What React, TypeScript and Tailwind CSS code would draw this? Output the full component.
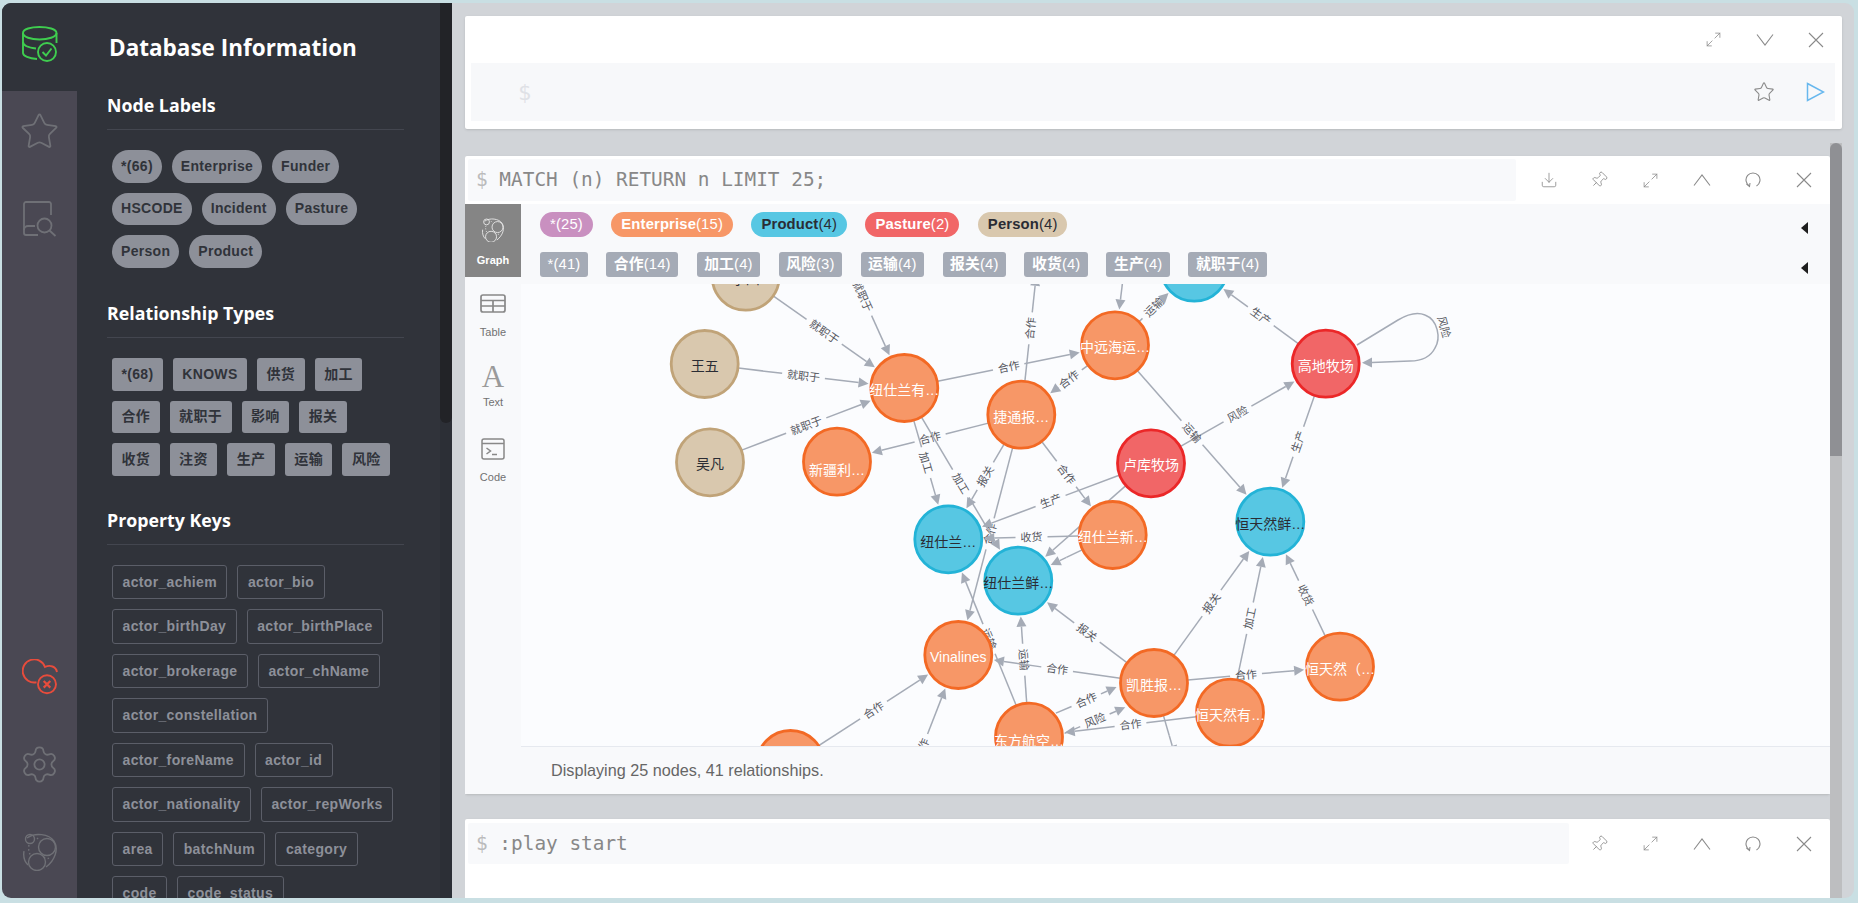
import React from 'react';
import { Star, Settings, Download, Pin, Maximize2 } from 'lucide-react';

type Pt = { x: number; y: number };

const R = 34;

const colors = {
  orange: { fill: '#f79767', stroke: '#f36924', text: '#ffffff' },
  blue: { fill: '#57c7e3', stroke: '#23b3d7', text: '#2a2c34' },
  red: { fill: '#f16667', stroke: '#eb2728', text: '#ffffff' },
  tan: { fill: '#d9c8ae', stroke: '#c0a378', text: '#2a2c34' },
};

// node positions are page pixels, the svg viewBox starts at the canvas corner
const nodes: Record<string, Pt & { label: string; kind: keyof typeof colors; dy?: number }> = {
  li: { x: 745.7, y: 276.7, label: '李四', kind: 'tan' },
  wang: { x: 704.7, y: 364, label: '王五', kind: 'tan' },
  wu: { x: 710, y: 462.3, label: '吴凡', kind: 'tan' },
  nzCo: { x: 904.3, y: 388, label: '纽仕兰有…', kind: 'orange' },
  xj: { x: 837, y: 461.7, label: '新疆利…', kind: 'orange', dy: 8 },
  jt: { x: 1021.3, y: 414.7, label: '捷通报…', kind: 'orange' },
  cosco: { x: 1115, y: 345.3, label: '中远海运…', kind: 'orange' },
  nzA: { x: 948.3, y: 539.3, label: '纽仕兰…', kind: 'blue', dy: 3 },
  nzNew: { x: 1112.7, y: 535, label: '纽仕兰新…', kind: 'orange' },
  luku: { x: 1151, y: 463.3, label: '卢库牧场', kind: 'red' },
  gaodi: { x: 1325.7, y: 363.7, label: '高地牧场', kind: 'red' },
  htFresh: { x: 1270.3, y: 521.7, label: '恒天然鲜…', kind: 'blue' },
  topBlue: { x: 1194.3, y: 267.7, label: '', kind: 'blue' },
  nzFresh: { x: 1018.3, y: 580.7, label: '纽仕兰鲜…', kind: 'blue' },
  vina: { x: 958.3, y: 655, label: 'Vinalines', kind: 'orange' },
  ks: { x: 1154, y: 683, label: '凯胜报…', kind: 'orange' },
  htCo: { x: 1230, y: 712.7, label: '恒天然有…', kind: 'orange' },
  ht: { x: 1340, y: 666.7, label: '恒天然（…', kind: 'orange' },
  east: { x: 1029, y: 736.7, label: '东方航空…', kind: 'orange', dy: 4 },
  low: { x: 790.5, y: 764, label: '', kind: 'orange' },
};

const off: Record<string, Pt> = {
  a: { x: 822, y: 206 },
  b: { x: 1040, y: 240 },
  c: { x: 1130, y: 220 },
  d: { x: 1185, y: 790 },
  e: { x: 886, y: 841 },
};

const at = (k: string): Pt => nodes[k] || off[k];

// from, to, label, perpendicular offset
const edges: [string, string, string, number?][] = [
  ['li', 'nzCo', '就职于'],
  ['wang', 'nzCo', '就职于'],
  ['wu', 'nzCo', '就职于'],
  ['a', 'nzCo', '就职于'],
  ['nzCo', 'cosco', '合作'],
  ['cosco', 'jt', '合作'],
  ['jt', 'xj', '合作'],
  ['jt', 'b', '合作'],
  ['jt', 'nzA', '报关'],
  ['jt', 'nzNew', '合作'],
  ['jt', 'vina', '合作'],
  ['nzCo', 'nzA', '加工'],
  ['nzCo', 'nzFresh', '加工'],
  ['luku', 'nzA', '生产'],
  ['luku', 'nzFresh', ''],
  ['nzNew', 'nzA', '收货'],
  ['nzNew', 'nzFresh', ''],
  ['cosco', 'topBlue', '运输'],
  ['c', 'cosco', ''],
  ['gaodi', 'topBlue', '生产'],
  ['luku', 'gaodi', '风险'],
  ['cosco', 'htFresh', '运输'],
  ['gaodi', 'htFresh', '生产'],
  ['ks', 'htFresh', '报关'],
  ['htCo', 'htFresh', '加工'],
  ['ht', 'htFresh', '收货'],
  ['ks', 'nzFresh', '报关'],
  ['east', 'nzFresh', '运输'],
  ['east', 'nzA', '运输'],
  ['ks', 'vina', '合作'],
  ['ks', 'ht', '合作'],
  ['east', 'ks', '合作', -11],
  ['east', 'ks', '风险', 11],
  ['htCo', 'east', '合作'],
  ['ks', 'd', ''],
  ['low', 'vina', '合作'],
  ['e', 'vina', '合作'],
];

const EDGE = '#a5abb6';

const Edge = ({ from, to, label, o = 0 }: { from: Pt; to: Pt; label: string; o?: number }) => {
  const dx = to.x - from.x;
  const dy = to.y - from.y;
  const len = Math.hypot(dx, dy);
  const ux = dx / len;
  const uy = dy / len;
  const px = -uy * o;
  const py = ux * o;
  const sx = from.x + ux * R + px;
  const sy = from.y + uy * R + py;
  const tx = to.x - ux * (R + 2) + px;
  const ty = to.y - uy * (R + 2) + py;
  const mx = (sx + tx) / 2;
  const my = (sy + ty) / 2;
  const gap = label ? label.length * 5.5 + 5 : 0;
  const hx = tx - ux * 10;
  const hy = ty - uy * 10;
  let angle = (Math.atan2(dy, dx) * 180) / Math.PI;
  if (angle > 90) angle -= 180;
  if (angle < -90) angle += 180;
  return (
    <g>
      <line x1={sx} y1={sy} x2={mx - ux * gap} y2={my - uy * gap} stroke={EDGE} strokeWidth={1.5} />
      <line x1={mx + ux * gap} y1={my + uy * gap} x2={hx} y2={hy} stroke={EDGE} strokeWidth={1.5} />
      <polygon
        points={`${tx},${ty} ${hx - uy * 5},${hy + ux * 5} ${hx + uy * 5},${hy - ux * 5}`}
        fill={EDGE}
      />
      {label && (
        <text
          x={mx}
          y={my}
          fontSize={11}
          fill="#55575e"
          textAnchor="middle"
          dominantBaseline="central"
          transform={`rotate(${angle} ${mx} ${my})`}
        >
          {label}
        </text>
      )}
    </g>
  );
};

const GraphCanvas = () => (
  <svg viewBox="521 284 1309 462" className="block w-[1309px] h-[462px]">
    {edges.map(([a, b, label, o], i) => (
      <Edge key={i} from={at(a)} to={at(b)} label={label} o={o} />
    ))}
    {/* self loop on 高地牧场 */}
    <path
      d="M1357 345 L1398 320 C1408 314 1418 312 1425 315 C1438 320 1441 338 1435 348 C1430 358 1421 361 1410 361 L1372 362.5"
      fill="none"
      stroke={EDGE}
      strokeWidth={1.5}
    />
    <polygon points="1362,362.7 1372,357.5 1372,367.5" fill={EDGE} />
    <text
      x={1444}
      y={327}
      fontSize={11}
      fill="#55575e"
      textAnchor="middle"
      dominantBaseline="central"
      transform="rotate(75 1444 327)"
    >
      风险
    </text>
    {Object.entries(nodes).map(([k, n]) => {
      const c = colors[n.kind];
      return (
        <g key={k}>
          <circle cx={n.x} cy={n.y} r={33.5} fill={c.fill} stroke={c.stroke} strokeWidth={2.8} />
          <text
            x={n.x}
            y={n.y + (n.dy ?? 2)}
            fontSize={14}
            fill={c.text}
            textAnchor="middle"
            dominantBaseline="central"
          >
            {n.label}
          </text>
        </g>
      );
    })}
  </svg>
);

const iconCls = 'text-[#8a8a8a]';

const ExpandIcon = () => <Maximize2 size={17} strokeWidth={1.1} className={iconCls} />;
const DownloadIcon = () => <Download size={18} strokeWidth={1.1} className={iconCls} />;
const PinIcon = () => <Pin size={18} strokeWidth={1.1} className={`${iconCls} rotate-45 -translate-x-[1px]`} />;
const CloseIcon = () => (
  <svg width="16" height="16" viewBox="0 0 16 16" className={iconCls} fill="none" stroke="currentColor" strokeWidth="1.1">
    <path d="M1 1 L15 15 M15 1 L1 15" />
  </svg>
);
const ChevronUp = () => (
  <svg width="18" height="12" viewBox="0 0 18 12" className={iconCls} fill="none" stroke="currentColor" strokeWidth="1.1">
    <path d="M1 11.5 L9 1 L17 11.5" />
  </svg>
);
const ChevronDown = () => (
  <svg width="18" height="12" viewBox="0 0 18 12" className={iconCls} fill="none" stroke="currentColor" strokeWidth="1.1">
    <path d="M1 .5 L9 11 L17 .5" />
  </svg>
);
const RefreshIcon = () => (
  <svg width="16" height="16" viewBox="0 0 16 16" className={iconCls} fill="none" stroke="currentColor" strokeWidth="1.1">
    <path d="M4.5 14 A7 7 0 1 1 11.5 14" />
    <path d="M1.5 12 L4.5 14.5 L5 11" />
  </svg>
);

const ToolBtn = ({ children }: { children: React.ReactNode }) => (
  <div className="w-[51px] h-full flex items-center justify-center">{children}</div>
);

const NeoLogo = ({ className, size = 36 }: { className: string; size?: number }) => (
  <svg width={size} height={size * 1.12} viewBox="0 0 34 38" fill="none" stroke="currentColor" className={className}>
    <path strokeWidth="1.4" d="M4 5 C12 -1 26 1 31 8 C36 16 32 27 23 34" />
    <path strokeWidth="1.4" d="M1 18 C0 24 2 29 5 32" />
    <circle cx="7" cy="6" r="4.5" strokeWidth="1.4" />
    <circle cx="24" cy="14" r="8.5" strokeWidth="1.4" />
    <circle cx="14" cy="29" r="8.5" strokeWidth="1.4" />
    <path strokeWidth="1.4" strokeDasharray="1.5 2.5" d="M6 12 C5 16 6 20 8 23 M14 5 C15 6 16 7 17 8 M21 24 C22 25 24 26 26 25" />
  </svg>
);

const DbIcon = () => (
  <svg width="36" height="36" viewBox="0 0 36 36" fill="none" stroke="#3fcd4f" strokeWidth="1.9">
    <path d="M1 7 C1 3 9 1 17.5 1 C26 1 34.500 3 34.500 7 C34.500 11 26 13.500 17.500 13.500 C9 13.500 1 11 1 7 Z" />
    <path d="M1 7 V27 C1 30 7 32.500 15 33" />
    <path d="M1 16 C1 19 6 21.500 14 22.500" />
    <path d="M34.500 7 V17" />
    <circle cx="25" cy="26" r="9" />
    <path d="M20.500 26 L24 29.500 L29.500 22.500" />
  </svg>
);

const CloudErrIcon = () => (
  <svg width="36" height="36" viewBox="0 0 36 36" fill="none" stroke="#e74c3c" strokeWidth="1.9">
    <path d="M14.500 23.200 A11.500 11.500 0 1 1 23 8 C28 5.500 34 7.500 35 13" />
    <circle cx="25" cy="25.300" r="9" />
    <path d="M21.700 22 L28.300 28.600 M28.300 22 L21.700 28.600" strokeWidth="2.200" />
  </svg>
);

const DocSearchIcon = () => (
  <svg width="36" height="36" viewBox="0 0 36 36" fill="none" stroke="#6f7076" strokeWidth="1.8">
    <path d="M29 14 V3 A2 2 0 0 0 27 1 H4 A2 2 0 0 0 2 3 V32 A2 2 0 0 0 4 34 H16" />
    <path d="M2 29 A4 4 0 0 1 6 25 H13" />
    <circle cx="22.500" cy="24.500" r="7" />
    <path d="M27.500 29.500 L33.500 35" />
  </svg>
);

const NavItem = ({ children, active }: { children: React.ReactNode; active?: boolean }) => (
  <div className={`h-[87.5px] flex items-center justify-center pb-[5px] ${active ? 'bg-[#30333a]' : ''}`}>
    {children}
  </div>
);

const Nav = () => (
  <div className="w-[75px] shrink-0 flex flex-col bg-[#4a4853]">
    <NavItem active>
      <DbIcon />
    </NavItem>
    <NavItem>
      <Star size={41} strokeWidth={1.05} className="text-[#6f7076]" />
    </NavItem>
    <NavItem>
      <DocSearchIcon />
    </NavItem>
    <div className="flex-1" />
    <NavItem>
      <CloudErrIcon />
    </NavItem>
    <NavItem>
      <Settings size={41} strokeWidth={1.05} className="text-[#6f7076]" />
    </NavItem>
    <NavItem>
      <NeoLogo size={34} className="text-[#6f7076]" />
    </NavItem>
  </div>
);

const nodeLabels = ['*(66)', 'Enterprise', 'Funder', 'HSCODE', 'Incident', 'Pasture', 'Person', 'Product'];
const relTypes = ['*(68)', 'KNOWS', '供货', '加工', '合作', '就职于', '影响', '报关', '收货', '注资', '生产', '运输', '风险'];
const propKeys = [
  'actor_achiem',
  'actor_bio',
  'actor_birthDay',
  'actor_birthPlace',
  'actor_brokerage',
  'actor_chName',
  'actor_constellation',
  'actor_foreName',
  'actor_id',
  'actor_nationality',
  'actor_repWorks',
  'area',
  'batchNum',
  'category',
  'code',
  'code_status',
];

const SectionHead = ({ title }: { title: string }) => (
  <h4 className="h-[37px] w-[297px] border-b border-[#43464f] font-['Open_Sans',sans-serif] font-bold text-[17.8px] leading-[24px] text-white">
    {title}
  </h4>
);

const Drawer = () => (
  <div className="w-[375px] shrink-0 flex bg-[#30333a]">
    <div className="w-[363px] pl-[30px] overflow-hidden">
      <h3 className="mt-[29px] ml-[2px] font-['Open_Sans',sans-serif] font-bold text-[22.500px] leading-[32px] text-white">
        Database Information
      </h3>
      <div className="mt-[29px]">
        <SectionHead title="Node Labels" />
        <div className="mt-[20px] ml-[5px] w-[288px] flex flex-wrap gap-[10px]">
          {nodeLabels.map(t => (
            <span key={t} className="h-[32.67px] px-[9px] flex items-center rounded-full bg-[#8d9099] text-[#30333a] text-[14px] tracking-[0.3px] font-bold">
              {t}
            </span>
          ))}
        </div>
      </div>
      <div className="mt-[33px]">
        <SectionHead title="Relationship Types" />
        <div className="mt-[20px] ml-[5px] w-[288px] flex flex-wrap gap-[10px]">
          {relTypes.map(t => (
            <span key={t} className="h-[32.67px] px-[9.5px] flex items-center rounded-[3px] bg-[#8d9099] text-[#30333a] text-[14px] tracking-[0.3px] font-bold">
              {t}
            </span>
          ))}
        </div>
      </div>
      <div className="mt-[32px]">
        <SectionHead title="Property Keys" />
        <div className="mt-[20px] ml-[5px] w-[288px] flex flex-wrap gap-[10px]">
          {propKeys.map(t => (
            <span key={t} className="h-[34.5px] px-[9.5px] flex items-center rounded-[3px] border border-[#5b5e68] text-[#8d9099] text-[14px] tracking-[0.35px] font-bold">
              {t}
            </span>
          ))}
        </div>
      </div>
    </div>
    <div className="w-[12px] bg-[#2c2f36]">
      <div className="h-[420px] bg-[#222327] rounded-b-[6px]" />
    </div>
  </div>
);

const legend = [
  { name: '*', n: '(25)', cls: 'bg-[#c990c0] text-white', bold: false },
  { name: 'Enterprise', n: '(15)', cls: 'bg-[#f79767] text-white', bold: true },
  { name: 'Product', n: '(4)', cls: 'bg-[#57c7e3] text-[#2a2c34]', bold: true },
  { name: 'Pasture', n: '(2)', cls: 'bg-[#f16667] text-white', bold: true },
  { name: 'Person', n: '(4)', cls: 'bg-[#d9c8ae] text-[#2a2c34]', bold: true },
];

const legendRels = [
  ['*', '(41)'],
  ['合作', '(14)'],
  ['加工', '(4)'],
  ['风险', '(3)'],
  ['运输', '(4)'],
  ['报关', '(4)'],
  ['收货', '(4)'],
  ['生产', '(4)'],
  ['就职于', '(4)'],
];

const Triangle = () => (
  <div className="ml-auto mr-[22px] mt-[10px] w-0 h-0 border-y-[6px] border-y-transparent border-r-[7px] border-r-[#1e1e1e]" />
);

const Tab = ({ label, icon, active, labelCls }: { label: string; icon: React.ReactNode; active?: boolean; labelCls: string }) => (
  <div
    className={`h-[73px] flex flex-col items-center text-[11px] ${
      active ? 'bg-[#858585] text-white font-bold' : 'text-[#717172]'
    }`}
  >
    <div className="h-[46px] flex items-center justify-center pt-[6px]">{icon}</div>
    <span className={`leading-[14px] ${labelCls}`}>{label}</span>
  </div>
);

const Tabs = () => (
  <div className="w-[56px] shrink-0 bg-[#f8f9fb]">
    <Tab active label="Graph" labelCls="mt-[3px]" icon={<NeoLogo size={22} className="text-[#e8e8e8]" />} />
    <Tab
      label="Table"
      labelCls="mt-[2px]"
      icon={
        <svg width="26" height="19" viewBox="0 0 26 19" fill="none" stroke="#888888" strokeWidth="1.7">
          <rect x="1" y="1" width="24" height="17" rx="2" />
          <path d="M1 6.500 H25 M1 12 H25 M13 6.500 V18" />
        </svg>
      }
    />
    <Tab
      label="Text"
      labelCls="-mt-[1px]"
      icon={<span className="font-['Liberation_Serif',serif] text-[31px] leading-[31px] font-normal text-[#9a9a9a]">A</span>}
    />
    <Tab
      label="Code"
      labelCls="mt-[1px]"
      icon={
        <svg width="24" height="22" viewBox="0 0 24 22" fill="none" stroke="#888888" strokeWidth="1.5">
          <rect x="1" y="1" width="22" height="20" rx="2" />
          <path d="M1 5.500 H23 M5.500 10 L9.500 13 L5.500 16 M11 16.500 H16" />
        </svg>
      }
    />
  </div>
);

const QueryLine = ({ text }: { text: string }) => (
  <div className="h-full pl-[8px] flex items-center font-['DejaVu_Sans_Mono',monospace] text-[19.4px] whitespace-pre">
    <span className="text-[#bbbbbb]">$ </span>
    <span className="text-[#888888]">{text}</span>
  </div>
);

export default function App() {
  return (
    <div className="w-screen h-screen overflow-hidden bg-[#c9dfe3] pt-[3px] pl-[2px] pr-[4px] pb-[5px] font-['Liberation_Sans','Noto_Sans_CJK_SC',sans-serif]">
      <div className="h-full flex rounded-[9px] overflow-hidden">
        <Nav />
        <Drawer />
        <div className="flex-1 min-w-0 flex flex-col bg-[#d1d4d8] pl-[13px] pr-[12px]">
          {/* editor frame */}
          <div className="mt-[13px] h-[113px] shrink-0 rounded-[2px] bg-white shadow-sm">
            <div className="h-[47px] flex justify-end pr-[1px]">
              <ToolBtn><ExpandIcon /></ToolBtn>
              <ToolBtn><ChevronDown /></ToolBtn>
              <ToolBtn><CloseIcon /></ToolBtn>
            </div>
            <div className="mx-[6px] mr-[7px] h-[58px] bg-[#f7f8fa] flex items-center">
              <span className="ml-[47px] font-['DejaVu_Sans_Mono',monospace] text-[22px] text-[#dfe1e6]">$</span>
              <div className="ml-auto flex items-center">
                <Star size={22} strokeWidth={1.2} className="text-[#8a8a8a]" />
                <svg className="ml-[31px] mr-[10px]" width="19" height="20" viewBox="0 0 19 20" fill="none" stroke="#68b8ee" strokeWidth="1.500">
                  <path d="M1.500 1.500 L17.500 10 L1.500 18.500 Z" />
                </svg>
              </div>
            </div>
          </div>

          <div className="mt-[14px] flex-1 min-h-0 flex">
            <div className="flex-1 min-w-0 pt-[13px] overflow-hidden">
              {/* result frame */}
              <div className="bg-white rounded-[2px] shadow-sm">
                <div className="h-[48px] flex pr-[1px]">
                  <div className="flex-1 mt-[3px] mb-[3px] ml-[3px] mr-[7px] rounded-[2px] bg-[#f8f9fb]">
                    <QueryLine text="MATCH (n) RETURN n LIMIT 25;" />
                  </div>
                  <ToolBtn><DownloadIcon /></ToolBtn>
                  <ToolBtn><PinIcon /></ToolBtn>
                  <ToolBtn><ExpandIcon /></ToolBtn>
                  <ToolBtn><ChevronUp /></ToolBtn>
                  <ToolBtn><RefreshIcon /></ToolBtn>
                  <ToolBtn><CloseIcon /></ToolBtn>
                </div>
                <div className="flex">
                  <Tabs />
                  <div className="flex-1 min-w-0 flex flex-col">
                    <div className="h-[80px] bg-[#f8f9fb] pl-[19px] pt-[8px]">
                      <div className="flex h-[25px] gap-[18.500px]">
                        {legend.map(c => (
                          <span key={c.name} className={`px-[10px] rounded-[12.500px] text-[14.8px] tracking-[0.15px] leading-[25px] whitespace-nowrap ${c.cls}`}>
                            <span className={c.bold ? 'font-bold' : ''}>{c.name}</span>
                            {c.n}
                          </span>
                        ))}
                        <Triangle />
                      </div>
                      <div className="flex h-[25px] mt-[15px] gap-[18.500px]">
                        {legendRels.map(([a, b]) => (
                          <span key={a} className="px-[7.5px] rounded-[3px] bg-[#a5abb6] text-white text-[14.8px] tracking-[0.15px] leading-[25px] whitespace-nowrap">
                            <span className={a === '*' ? '' : 'font-bold'}>{a}</span>
                            {b}
                          </span>
                        ))}
                        <Triangle />
                      </div>
                    </div>
                    <div className="h-[462px] bg-[#fbfcfe] overflow-hidden">
                      <GraphCanvas />
                    </div>
                    <div className="h-[48px] border-t border-[#e6e9ef] bg-[#f8f9fb] pl-[30px] flex items-center text-[16.2px] text-[#666666]">
                      Displaying 25 nodes, 41 relationships.
                    </div>
                  </div>
                </div>
              </div>

              {/* :play frame */}
              <div className="mt-[25px] h-[90px] bg-white rounded-[2px] shadow-sm">
                <div className="h-[49px] flex pt-[4px] pr-[1px]">
                  <div className="flex-1 h-[41px] ml-[3px] mr-[5px] rounded-[2px] bg-[#f8f9fb]">
                    <QueryLine text=":play start" />
                  </div>
                  <div className="flex h-[41px]">
                    <ToolBtn><PinIcon /></ToolBtn>
                    <ToolBtn><ExpandIcon /></ToolBtn>
                    <ToolBtn><ChevronUp /></ToolBtn>
                    <ToolBtn><RefreshIcon /></ToolBtn>
                    <ToolBtn><CloseIcon /></ToolBtn>
                  </div>
                </div>
              </div>
            </div>
            <div className="w-[12px] shrink-0 bg-[#bdbec0]">
              <div className="h-[313px] bg-[#8f9094] rounded-t-[6px]" />
            </div>
          </div>
        </div>
      </div>
    </div>
  );
}
